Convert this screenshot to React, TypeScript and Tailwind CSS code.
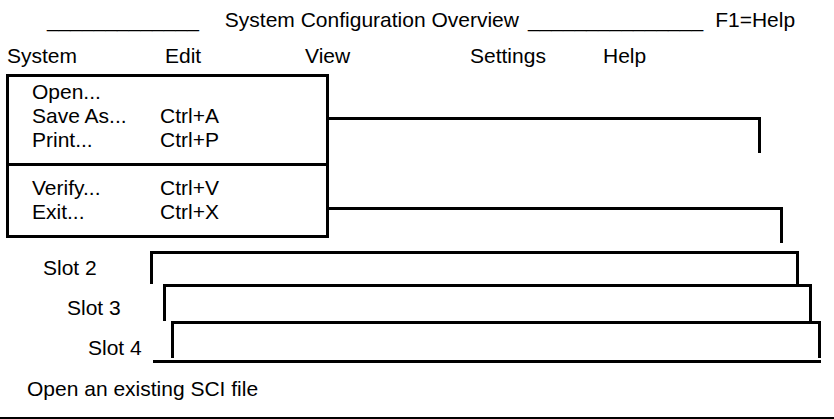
export default function App() {
  const font = "font-['Liberation_Sans',Arial,sans-serif]";

  return (
    <div className={`w-[834px] h-[419px] bg-white text-black text-[21px] leading-[24px] overflow-hidden ${font}`}>
      {/* title line */}
      <div className="flex pt-[8px] whitespace-pre">
        <span className="ml-[47px]">_____________</span>
        <span className="ml-[26px]">System Configuration Overview</span>
        <span className="ml-[9px]">_______________</span>
        <span className="ml-[12px]">F1=Help</span>
      </div>

      {/* menu bar */}
      <div className="flex mt-[12px]">
        <span className="ml-[7px] w-[158px]">System</span>
        <span className="w-[140px]">Edit</span>
        <span className="w-[165px]">View</span>
        <span className="w-[133px]">Settings</span>
        <span>Help</span>
      </div>

      {/* pull-down menu with its leader lines */}
      <div className="flex h-[164px] mt-[6px] ml-[6px]">
        <div className="w-[323px] h-[164px] border-[3px] border-black">
          <div className="pl-[23px] pt-[3px]">
            <div className="flex"><span className="w-[128px]">Open...</span></div>
            <div className="flex"><span className="w-[128px]">Save As...</span><span>Ctrl+A</span></div>
            <div className="flex"><span className="w-[128px]">Print...</span><span>Ctrl+P</span></div>
          </div>
          <div className="h-[3px] bg-black mt-[11px]" />
          <div className="pl-[23px] pt-[10px]">
            <div className="flex"><span className="w-[128px]">Verify...</span><span>Ctrl+V</span></div>
            <div className="flex"><span className="w-[128px]">Exit...</span><span>Ctrl+X</span></div>
          </div>
        </div>
        <div className="flex flex-col">
          <div className="shrink-0 mt-[43px] w-[432px] h-[36px] border-t-[3px] border-r-[3px] border-black" />
          <div className="shrink-0 mt-[54px] w-[454px] h-[36px] border-t-[3px] border-r-[3px] border-black" />
        </div>
      </div>

      {/* slots */}
      <div className="flex h-[33px] mt-[13px]">
        <span className="w-[150px] pl-[43px] pt-[5px]">Slot 2</span>
        <div className="w-[649px] border-t-[3px] border-x-[3px] border-black" />
      </div>
      <div className="flex h-[37px]">
        <span className="w-[163px] pl-[67px] pt-[12px]">Slot 3</span>
        <div className="w-[649px] border-t-[3px] border-x-[3px] border-black" />
      </div>
      <div className="flex h-[37px]">
        <span className="w-[171px] pl-[88px] pt-[15px]">Slot 4</span>
        <div className="w-[650px] border-t-[3px] border-x-[3px] border-black" />
      </div>
      <div className="ml-[153px] w-[668px] h-[3px] mt-[2px] bg-black" />

      {/* status line */}
      <div className="ml-[27px] mt-[14px]">Open an existing SCI file</div>
      <div className="h-[2px] bg-black mt-[16px]" />
    </div>
  );
}
